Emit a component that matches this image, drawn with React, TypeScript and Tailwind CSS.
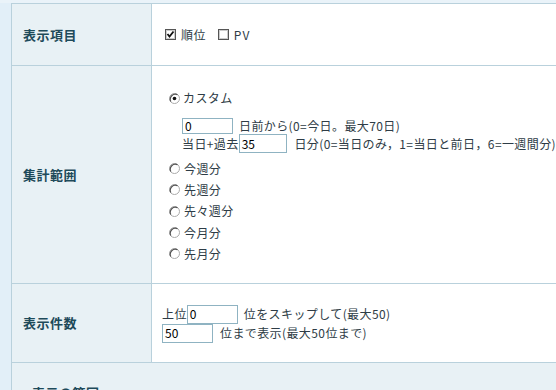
import React from "react";

const font = { fontFamily: '"MS PGothic","Noto Sans CJK JP",sans-serif' };

function Check({ on }: { on?: boolean }) {
  return (
    <svg width="11" height="11" viewBox="0 0 11 11" className="shrink-0">
      <rect x="0.5" y="0.5" width="10" height="10" fill="#fff" stroke="#555" />
      <rect x="1.5" y="1.5" width="8" height="8" fill="none" stroke="#ccc" />
      {on && <path d="M2.5 5 L4.5 7.5 L8.5 2.5" stroke="#111" strokeWidth="1.8" fill="none" />}
    </svg>
  );
}

function Radio({ on }: { on?: boolean }) {
  return (
    <svg width="11" height="11" viewBox="0 0 11 11" className="shrink-0">
      <circle cx="5.5" cy="5.5" r="5" fill="#fff" stroke="#aaa" />
      <path d="M1.8 8.5 A5 5 0 0 1 8.5 1.8" stroke="#555" strokeWidth="1.2" fill="none" />
      {on && <circle cx="5.5" cy="5.5" r="1.8" fill="#111" />}
    </svg>
  );
}

function Input({ value, w = "w-[51px]", h = "h-[18px]" }: { value: string; w?: string; h?: string }) {
  return (
    <div className={`${w} ${h} border border-[#8fb3c2] bg-white px-[2px] text-[12px] leading-[16px] tracking-normal text-black flex items-center`}>
      {value}
    </div>
  );
}

export default function App() {
  const labelCls =
    "bg-[#e8f1f5] border-r border-b border-[#b9d1dc] flex items-center pl-[11px] text-[13px] font-bold tracking-[0.5px] text-[#1e4a5a]";
  const cellCls = "border-b border-[#b9d1dc] bg-white text-[12px] tracking-[0.4px] text-[#2e3c46]";
  return (
    <div className="w-[556px] h-[390px] overflow-hidden bg-white" style={font}>
      <div className="flex h-full pt-[3px] bg-[#eaf3f9]">
        <div className="w-[11px] shrink-0 bg-[#e2eff8]" />
        <div className="flex-1 border-l border-t border-[#b9d1dc] grid grid-cols-[140px_1fr] auto-rows-min">
          <div className={`${labelCls} h-[62px]`}>表示項目</div>
          <div className={`${cellCls} h-[62px] flex items-center pl-[13px] gap-[5px]`}>
            <Check on />
            <span>順位</span>
            <span className="ml-[2px]" />
            <Check />
            <span className="tracking-[1px]">PV</span>
          </div>

          <div className={`${labelCls} h-[218px]`}>集計範囲</div>
          <div className={`${cellCls} h-[218px] pl-[17px] pt-[25px] whitespace-nowrap overflow-hidden`}>
            <div className="flex items-center gap-[3px] h-[14px]">
              <Radio on />
              <span>カスタム</span>
            </div>
            <div className="pl-[13px] mt-[13px]">
              <div className="flex items-center gap-[6px] h-[16px]">
                <Input value="0" h="h-[16px]" />
                <span>日前から(0=今日。最大70日)</span>
              </div>
              <div className="flex items-center h-[19px]">
                <span>当日+過去</span>
                <Input value="35" h="h-[19px]" />
                <span className="ml-[7px]">日分(0=当日のみ，1=当日と前日，6=一週間分)</span>
              </div>
            </div>
            <div className="mt-[5px] flex flex-col">
              {["今週分", "先週分", "先々週分", "今月分", "先月分"].map((t) => (
                <div key={t} className="flex items-center gap-[4px] h-[21.3px]">
                  <Radio />
                  <span>{t}</span>
                </div>
              ))}
            </div>
          </div>

          <div className={`${labelCls} h-[79px]`}>表示件数</div>
          <div className={`${cellCls} h-[79px] flex flex-col justify-center pl-[10px] pt-[1px]`}>
            <div className="flex items-center h-[19px]">
              <span>上位</span>
              <Input value="0" h="h-[19px]" />
              <span className="ml-[6px]">位をスキップして(最大50)</span>
            </div>
            <div className="flex items-center h-[19px]">
              <Input value="50" h="h-[19px]" />
              <span className="ml-[7px]">位まで表示(最大50位まで)</span>
            </div>
          </div>

          <div className="col-span-2 bg-[#e8f1f5] h-[60px] pl-[20px] pt-[20px] text-[13px] font-bold tracking-[0.5px] text-[#1e4a5a]">
            表示の範囲
          </div>
        </div>
      </div>
    </div>
  );
}
